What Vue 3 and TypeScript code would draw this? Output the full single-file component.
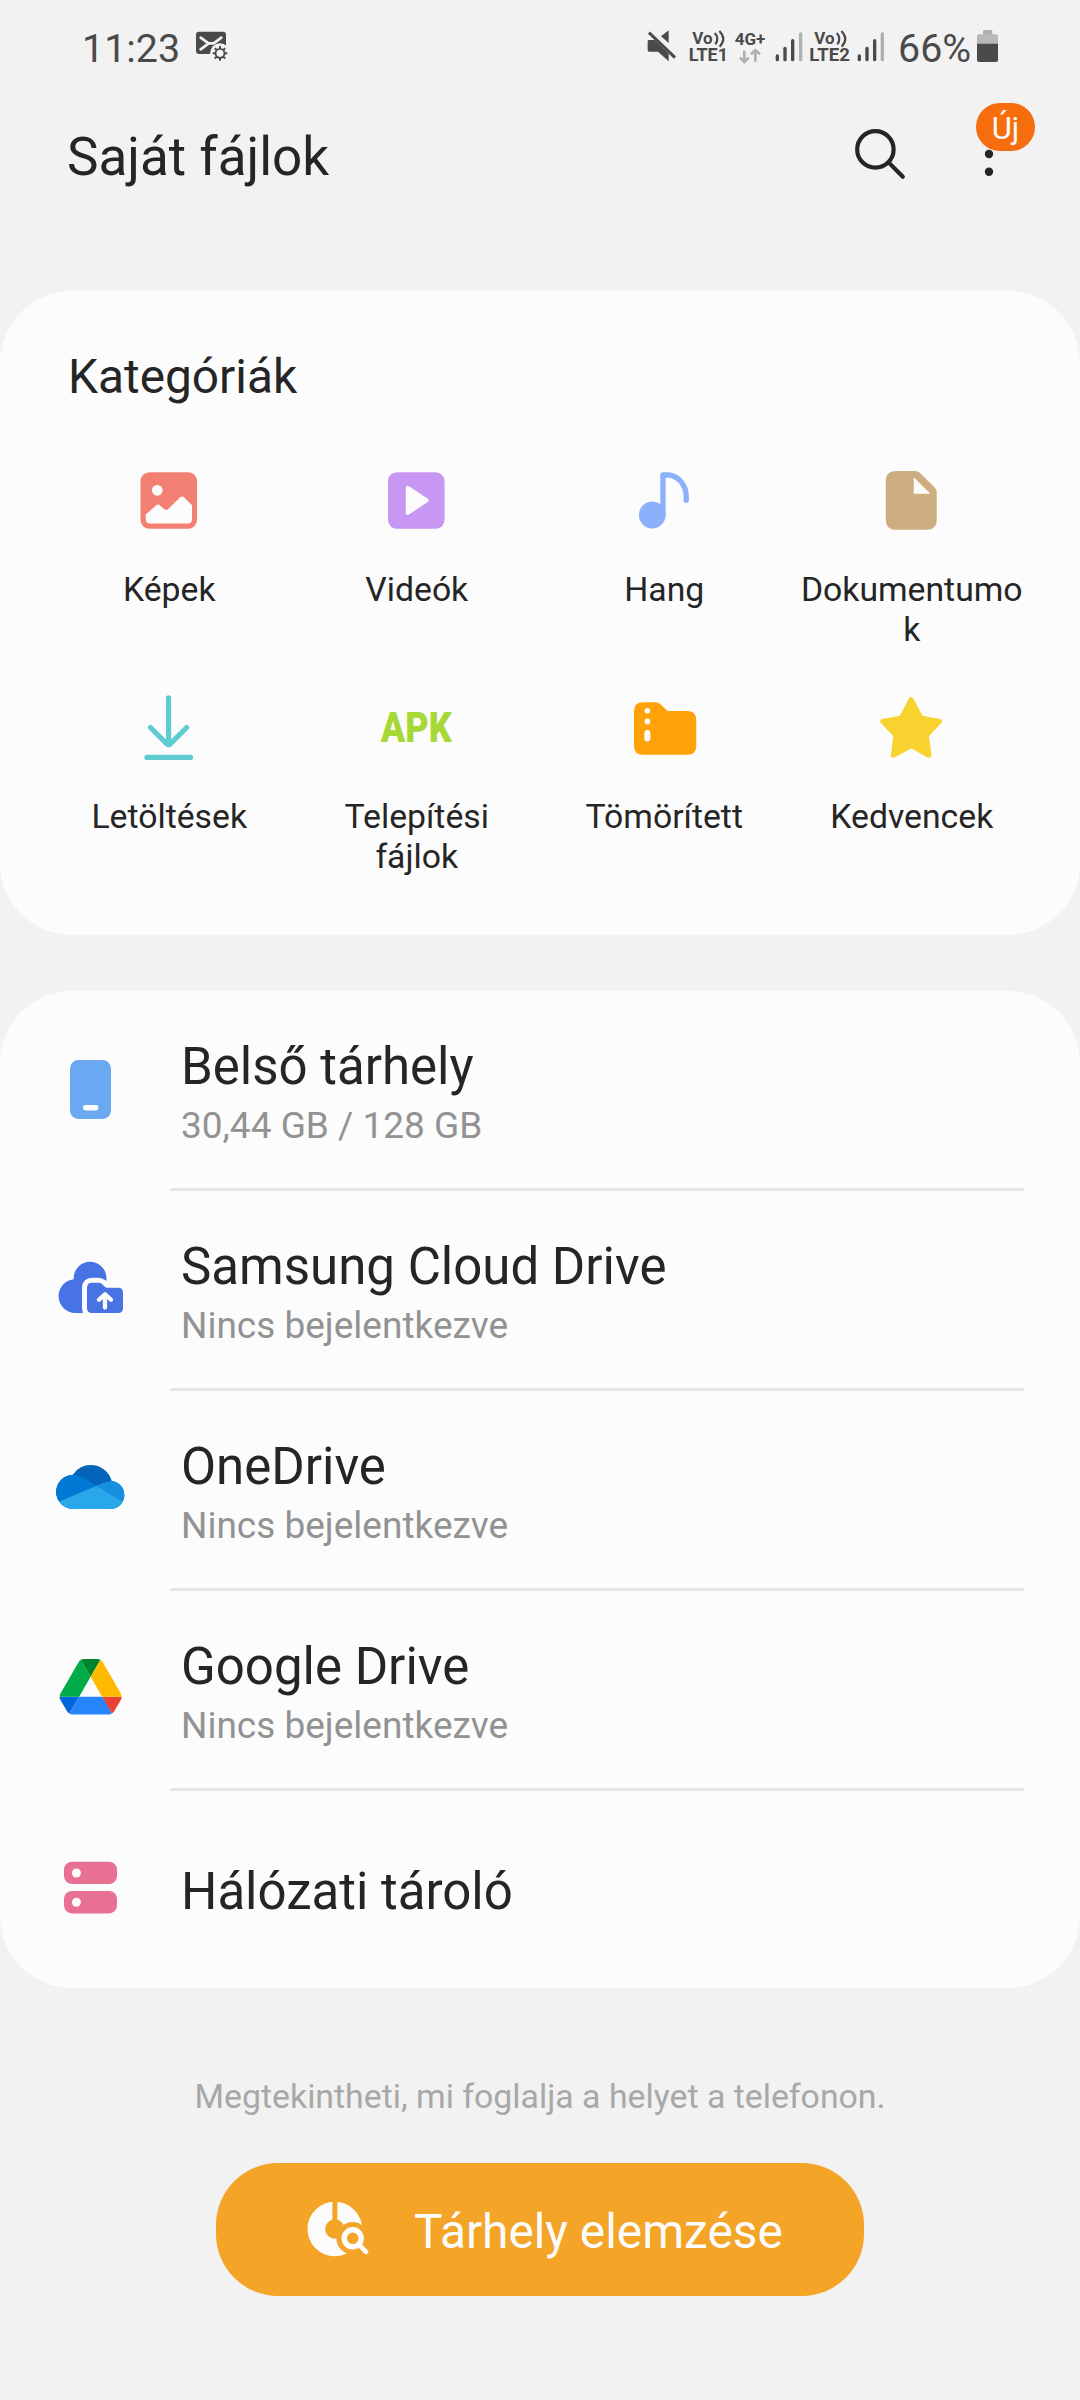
<script setup lang="ts">
interface Category {
  id: string
  label: string
  viewBox: string
}

interface Storage {
  id: string
  title: string
  detail?: string
}

const categories: Category[] = [
  { id: 'images', label: 'Képek', viewBox: '132.75 465 72 72' },
  { id: 'videos', label: 'Videók', viewBox: '380.25 465 72 72' },
  { id: 'audio', label: 'Hang', viewBox: '627.75 465 72 72' },
  { id: 'documents', label: 'Dokumentumok', viewBox: '875.25 465 72 72' },
  { id: 'downloads', label: 'Letöltések', viewBox: '132.75 692 72 72' },
  { id: 'apk', label: 'Telepítési fájlok', viewBox: '380.25 692 72 72' },
  { id: 'compressed', label: 'Tömörített', viewBox: '627.75 692 72 72' },
  { id: 'favourites', label: 'Kedvencek', viewBox: '875.25 692 72 72' },
]

const storages: Storage[] = [
  { id: 'internal', title: 'Belső tárhely', detail: '30,44 GB / 128 GB' },
  { id: 'samsung', title: 'Samsung Cloud Drive', detail: 'Nincs bejelentkezve' },
  { id: 'onedrive', title: 'OneDrive', detail: 'Nincs bejelentkezve' },
  { id: 'gdrive', title: 'Google Drive', detail: 'Nincs bejelentkezve' },
  { id: 'network', title: 'Hálózati tároló' },
]

const gearTeeth: number[] = [0, 45, 90, 135, 180, 225, 270, 315]
</script>

<template>
  <main class="screen">
    <div class="status">
      <span class="clock">11:23</span>
      <svg class="mail" width="36" height="40" viewBox="402 45 108 120">
        <rect x="408" y="65" width="90" height="67" rx="9" fill="#4a4a4a" />
        <path d="M422 83 L446 100 H461 L484 83 M446 100 L422 118" fill="none" stroke="#f2f2f2" stroke-width="8" stroke-linecap="round" stroke-linejoin="round" />
        <circle cx="480" cy="130" r="30" fill="#f2f2f2" />
        <circle cx="480" cy="130" r="13.5" fill="none" stroke="#4a4a4a" stroke-width="5.5" />
        <rect
          v-for="angle in gearTeeth"
          :key="angle"
          x="477"
          y="108"
          width="6"
          height="8"
          fill="#4a4a4a"
          :transform="`rotate(${angle} 480 130)`"
        />
      </svg>
      <div class="indicators">
        <svg width="42" height="40" viewBox="45 45 126 120">
          <path d="M57 90 H74 L116 131 V154 L84 125 H57 Q53 125 53 121 V94 Q53 90 57 90Z M93 79 L113 63 Q116 61 116 65 V99Z" fill="#4a4a4a" />
          <path d="M57 68 L135 143" stroke="#4a4a4a" stroke-width="9" />
        </svg>
        <svg width="46" height="40" viewBox="171 45 138 120" class="glyphs">
          <text x="187" y="101" font-size="50" textLength="61" lengthAdjust="spacingAndGlyphs">Vo</text>
          <path d="M254 69 Q269 84 256 103 M268 63 Q291 86 269 110" fill="none" stroke="#4a4a4a" stroke-width="6.5" />
          <text x="176" y="153" font-size="54" textLength="118" lengthAdjust="spacingAndGlyphs">LTE1</text>
        </svg>
        <svg width="40" height="40" viewBox="309 45 120 120" class="glyphs">
          <text x="314" y="105" font-size="50" textLength="92" lengthAdjust="spacingAndGlyphs">4G+</text>
          <path d="M343 122 V154 M330 143 L343 156 L356 143 M376 155 V122 M363 133 L376 120 L390 133" fill="none" stroke="#b0b0b0" stroke-width="8" />
        </svg>
        <svg width="35" height="40" viewBox="429 45 105 120">
          <rect x="437" y="133" width="10" height="21" rx="5" fill="#4a4a4a" />
          <rect x="460" y="110" width="10" height="44" rx="5" fill="#4a4a4a" />
          <rect x="483" y="87" width="10" height="67" rx="5" fill="#4a4a4a" />
          <rect x="507" y="67" width="10" height="87" rx="5" fill="#b0b0b0" />
        </svg>
        <svg width="47" height="40" viewBox="534 45 141 120" class="glyphs">
          <text x="553" y="101" font-size="50" textLength="61" lengthAdjust="spacingAndGlyphs">Vo</text>
          <path d="M620 69 Q635 84 622 103 M634 63 Q657 86 635 110" fill="none" stroke="#4a4a4a" stroke-width="6.5" />
          <text x="538" y="153" font-size="54" textLength="122" lengthAdjust="spacingAndGlyphs">LTE2</text>
        </svg>
        <svg width="35" height="40" viewBox="675 45 105 120">
          <rect x="683" y="133" width="10" height="21" rx="5" fill="#4a4a4a" />
          <rect x="706" y="110" width="10" height="44" rx="5" fill="#4a4a4a" />
          <rect x="729" y="87" width="10" height="67" rx="5" fill="#4a4a4a" />
          <rect x="752" y="67" width="10" height="87" rx="5" fill="#b0b0b0" />
        </svg>
        <span class="percent">66%</span>
        <svg width="21" height="40" viewBox="1041 45 63 120">
          <path d="M1059 75 V64 Q1059 60 1063 60 H1083 Q1087 60 1087 64 V75Z" fill="#b0b0b0" />
          <path d="M1041 102 V79 Q1041 73 1047 73 H1098 Q1104 73 1104 79 V102Z" fill="#b8b8b8" />
          <path d="M1041 101 H1104 V150 Q1104 156 1098 156 H1047 Q1041 156 1041 150Z" fill="#4a4a4a" />
        </svg>
      </div>
    </div>

    <header class="header">
      <h1>Saját fájlok</h1>
      <div class="actions">
        <svg width="60" height="60" viewBox="850 124 60 60" fill="none" stroke="#252525" stroke-width="4.2" stroke-linecap="round">
          <circle cx="875.4" cy="149.4" r="18.2" />
          <path d="M888.8 162.6 L902.8 176.8" />
        </svg>
        <div class="more">
          <svg width="20" height="60" viewBox="978.8 124 20 60" fill="#252525">
            <circle cx="988.8" cy="136.3" r="4.2" />
            <circle cx="988.8" cy="154" r="4.2" />
            <circle cx="988.8" cy="171.7" r="4.2" />
          </svg>
          <span class="badge">Új</span>
        </div>
      </div>
    </header>

    <section class="card categories">
      <h2>Kategóriák</h2>
      <div class="grid">
        <div v-for="item in categories" :key="item.id" class="tile">
          <svg width="72" height="72" :viewBox="item.viewBox">
            <template v-if="item.id === 'images'">
              <rect x="140.2" y="472.2" width="56.6" height="56.6" rx="9" fill="#f28173" />
              <circle cx="157" cy="490.3" r="5.4" fill="#fcfcfc" />
              <path d="M145.5 514.5 L155.8 505.4 Q157.8 503.6 159.8 505.4 L164.2 509.2 Q166 510.7 167.8 509.2 L179.4 497.8 Q181.8 495.4 184.2 497.8 L191.8 505.2 V519 Q191.8 523.6 187.2 523.6 H150 Q145.5 523.6 145.5 519Z" fill="#fcfcfc" />
            </template>
            <template v-else-if="item.id === 'videos'">
              <rect x="388.2" y="472.2" width="56.6" height="56.6" rx="9" fill="#c797f3" />
              <path d="M408 487.8 L426.9 500.3 L408 512.8Z" fill="#fcfcfc" stroke="#fcfcfc" stroke-width="4" stroke-linejoin="round" />
            </template>
            <template v-else-if="item.id === 'audio'">
              <circle cx="652" cy="515" r="13.4" fill="#8cb0fc" />
              <path d="M662.7 514 V475 H667.5 C678 475 686 485.5 686 496.5 V500.3" fill="none" stroke="#8cb0fc" stroke-width="5.3" stroke-linecap="round" stroke-linejoin="round" />
            </template>
            <template v-else-if="item.id === 'documents'">
              <path d="M896 471 H915.5 Q918.3 471 920.3 473 L935 487.6 Q937 489.6 937 492.4 V519.8 Q937 529.8 927 529.8 H896 Q886 529.8 886 519.8 V481 Q886 471 896 471Z" fill="#ceae80" />
              <path d="M914 477.2 V493.8 H930.5Z" fill="#fcfcfc" />
            </template>
            <template v-else-if="item.id === 'downloads'">
              <path d="M168.3 697.8 V744 M150.2 727.5 L166.6 743.9 Q168.3 745.6 170 743.9 L186.5 727.5 M146.7 757.4 H190.3" fill="none" stroke="#5fccd1" stroke-width="5.2" stroke-linecap="round" stroke-linejoin="round" />
            </template>
            <template v-else-if="item.id === 'apk'">
              <text x="381" y="742.4" class="apk" textLength="71" lengthAdjust="spacingAndGlyphs">APK</text>
            </template>
            <template v-else-if="item.id === 'compressed'">
              <path d="M642.7 702.3 H655 Q658 702.3 660.2 704.3 L667.3 711 H687 Q696 711 696 720 V745.7 Q696 754.7 687 754.7 H642.7 Q633.7 754.7 633.7 745.7 V711.3 Q633.7 702.3 642.7 702.3Z" fill="#ffa20a" />
              <circle cx="647.1" cy="710.7" r="2.8" fill="#fcfcfc" />
              <circle cx="647.1" cy="721.4" r="2.8" fill="#fcfcfc" />
              <rect x="644.1" y="730" width="6" height="11.4" rx="3" fill="#fcfcfc" />
            </template>
            <template v-else>
              <path d="M911.4 699.6 L921 718 L939.8 721.4 L926.6 735.4 L929.2 755.2 L911.4 745.6 L893.6 755.2 L896.2 735.4 L883 721.4 L901.8 718Z" fill="#f8d22e" stroke="#f8d22e" stroke-width="5" stroke-linejoin="round" />
            </template>
          </svg>
          <span>{{ item.label }}</span>
        </div>
      </div>
    </section>

    <section class="card storages">
      <div v-for="item in storages" :key="item.id" class="row" :class="{ single: !item.detail }">
        <svg v-if="item.id === 'internal'" width="80" height="80" viewBox="50 1050 80 80">
          <rect x="70" y="1060" width="41" height="59" rx="8.5" fill="#6aa9f1" />
          <rect x="83" y="1105" width="15.4" height="5.4" rx="2.4" fill="#fcfcfc" />
        </svg>
        <svg v-else-if="item.id === 'samsung'" width="80" height="80" viewBox="50 1250 80 80">
          <path d="M75.2 1313 A16.9 16.9 0 0 1 73.7 1279.3 A16.4 16.4 0 1 1 106.3 1280.5 V1313Z" fill="#4773e4" />
          <path d="M92 1282.7 H98.5 Q100.5 1282.7 102 1284 L106 1287.7 H118 Q123 1287.7 123 1292.7 V1308 Q123 1313 118 1313 H92 Q87 1313 87 1308 V1287.7 Q87 1282.7 92 1282.7Z" fill="none" stroke="#fcfcfc" stroke-width="10" />
          <path d="M92 1282.7 H98.5 Q100.5 1282.7 102 1284 L106 1287.7 H118 Q123 1287.7 123 1292.7 V1308 Q123 1313 118 1313 H92 Q87 1313 87 1308 V1287.7 Q87 1282.7 92 1282.7Z" fill="#4773e4" />
          <path d="M105 1307.6 V1295 M99 1299.8 L105 1294.2 L111 1299.8" fill="none" stroke="#fcfcfc" stroke-width="4.3" stroke-linecap="round" stroke-linejoin="round" />
        </svg>
        <svg v-else-if="item.id === 'onedrive'" width="80" height="80" viewBox="50 1450 80 80">
          <defs>
            <clipPath id="cloud-outline">
              <circle cx="73.3" cy="1491.9" r="17.2" />
              <circle cx="90.8" cy="1486.8" r="21.7" />
              <circle cx="110.3" cy="1495" r="14" />
              <rect x="73.3" y="1485" width="37" height="24" />
            </clipPath>
          </defs>
          <g clip-path="url(#cloud-outline)">
            <rect x="50" y="1450" width="80" height="80" fill="#0364b8" />
            <path d="M50 1474.7 H74 Q78 1474.9 81 1476.7 L96.7 1485.7 L55 1503Z" fill="#0078d4" />
            <path d="M96.7 1485.7 L103 1483 Q107 1481 112 1481 L130 1478 V1506Z" fill="#1490df" />
            <path d="M96.7 1485.7 L130 1506 V1515 H50 V1505.2Z" fill="#28a8ea" />
          </g>
        </svg>
        <svg v-else-if="item.id === 'gdrive'" width="80" height="80" viewBox="50 1650 80 80">
          <g transform="translate(59.6 1659) scale(0.711)">
            <path d="m6.6 66.85 3.85 6.65c.8 1.4 1.95 2.5 3.3 3.3l13.75-23.8h-27.5c0 1.55.4 3.1 1.2 4.5z" fill="#0066da" />
            <path d="m43.65 25-13.75-23.8c-1.35.8-2.5 1.9-3.3 3.3l-25.4 44a9.06 9.06 0 0 0 -1.2 4.5h27.5z" fill="#00ac47" />
            <path d="m73.55 76.8c1.35-.8 2.5-1.9 3.3-3.3l1.6-2.75 7.65-13.25c.8-1.4 1.2-2.95 1.2-4.5h-27.502l5.852 11.5z" fill="#ea4335" />
            <path d="m43.65 25 13.75-23.8c-1.35-.8-2.9-1.2-4.5-1.2h-18.5c-1.6 0-3.15.45-4.5 1.2z" fill="#00832d" />
            <path d="m59.8 53h-32.3l-13.75 23.8c1.35.8 2.9 1.2 4.5 1.2h50.8c1.6 0 3.15-.45 4.5-1.2z" fill="#2684fc" />
            <path d="m73.4 26.5-12.7-22c-.8-1.4-1.95-2.5-3.3-3.3l-13.75 23.8 16.15 28h27.45c0-1.55-.4-3.1-1.2-4.5z" fill="#ffba00" />
          </g>
        </svg>
        <svg v-else width="80" height="80" viewBox="50 1850 80 80">
          <rect x="64" y="1861.7" width="53" height="22.4" rx="8" fill="#e87092" />
          <rect x="64" y="1891" width="53" height="22.4" rx="8" fill="#e87092" />
          <circle cx="76.4" cy="1873" r="4.5" fill="#fcfcfc" />
          <circle cx="76.4" cy="1902.3" r="4.5" fill="#fcfcfc" />
        </svg>
        <div class="info">
          <span class="name">{{ item.title }}</span>
          <span v-if="item.detail" class="detail">{{ item.detail }}</span>
        </div>
      </div>
    </section>

    <p class="hint">Megtekintheti, mi foglalja a helyet a telefonon.</p>
    <button class="analyze" type="button">
      <svg width="76" height="72" viewBox="300 2193 76 72">
        <circle cx="334.8" cy="2229" r="18.5" fill="none" stroke="#fcfcfc" stroke-width="17.6" />
        <rect x="332.4" y="2198" width="5" height="24" fill="#f4a427" />
        <circle cx="352.7" cy="2238.3" r="16.3" fill="#f4a427" />
        <path d="M352.7 2238.3 L366 2251.6" stroke="#f4a427" stroke-width="14" stroke-linecap="round" />
        <circle cx="352.7" cy="2238.3" r="8.5" fill="none" stroke="#fcfcfc" stroke-width="5.4" />
        <path d="M359 2244.6 L366 2251.8" stroke="#fcfcfc" stroke-width="4.8" stroke-linecap="round" />
      </svg>
      <span>Tárhely elemzése</span>
    </button>
  </main>
</template>

<style>
body {
  margin: 0;
  background: #f2f2f2;
}
</style>

<style scoped>
.screen {
  box-sizing: border-box;
  width: 1080px;
  height: 2400px;
  overflow: hidden;
  display: flex;
  flex-direction: column;
  background: #f2f2f2;
  color: #252525;
  font-family: Roboto, "Noto Sans", sans-serif;
}

svg {
  display: block;
  flex: none;
  overflow: visible;
}

h1,
h2,
p {
  margin: 0;
  font-weight: 400;
}

.status {
  display: flex;
  align-items: flex-start;
  height: 61px;
  padding: 25px 82px 0;
  color: #4a4a4a;
  font-size: 39.4px;
  line-height: 47px;
}

.clock {
  width: 112px;
}

.indicators {
  display: flex;
  margin-left: auto;
}

.glyphs text {
  fill: #4a4a4a;
  font-weight: 700;
}

.percent {
  box-sizing: border-box;
  width: 87px;
  padding-left: 8px;
}

.header {
  display: flex;
  justify-content: space-between;
  align-items: flex-start;
  box-sizing: border-box;
  height: 205px;
  padding: 38px 81px 0 67px;
}

.header h1 {
  padding-top: 2px;
  font-size: 53px;
  line-height: 62px;
}

.actions {
  display: flex;
  gap: 69px;
}

.more {
  position: relative;
}

.badge {
  position: absolute;
  left: -3px;
  top: -21px;
  width: 59px;
  height: 48px;
  border-radius: 24px;
  background: #f66d0e;
  color: #fcfcfc;
  font-size: 31px;
  line-height: 51px;
  text-align: center;
}

.card {
  flex: none;
  box-sizing: border-box;
  border-radius: 72px;
  background: #fcfcfc;
}

.categories {
  height: 644px;
  padding: 58px 45px 0;
}

.categories h2 {
  padding-left: 23px;
  font-size: 47.8px;
  line-height: 56px;
}

.grid {
  display: grid;
  grid-template-columns: repeat(4, 1fr);
  grid-auto-rows: 227px;
  margin-top: 60px;
}

.tile {
  display: flex;
  flex-direction: column;
  align-items: center;
  gap: 33px;
}

.tile span {
  width: 230px;
  padding-left: 1px;
  font-size: 33.75px;
  line-height: 40px;
  text-align: center;
  overflow-wrap: anywhere;
}

.apk {
  fill: #a6d935;
  font-size: 42px;
  font-weight: 900;
}

.storages {
  margin-top: 56px;
  height: 997px;
}

.row {
  display: flex;
  gap: 51px;
  box-sizing: border-box;
  height: 200px;
  padding: 59px 56px 0 50px;
  background: linear-gradient(#e6e6e6, #e6e6e6) 170px 197px / 854px 3px no-repeat;
}

.row.single {
  height: 197px;
}

.info {
  display: flex;
  flex-direction: column;
  gap: 8px;
  margin-top: -13px;
}

.single .info {
  margin-top: 12px;
}

.name {
  font-size: 51px;
  line-height: 59px;
}

.detail {
  color: #929292;
  font-size: 37px;
  line-height: 43px;
}

.hint {
  margin-top: 89px;
  color: #a8a8a8;
  font-size: 33.85px;
  line-height: 39px;
  text-align: center;
}

.analyze {
  display: flex;
  align-items: flex-start;
  align-self: center;
  gap: 38px;
  box-sizing: border-box;
  width: 648px;
  height: 133px;
  margin-top: 47px;
  padding: 30px 0 0 84px;
  border: 0;
  border-radius: 62px;
  background: #f4a427;
  color: #fcfcfc;
  font-family: inherit;
  font-size: 47.8px;
  line-height: 56px;
}

.analyze span {
  padding-top: 11px;
}
</style>
